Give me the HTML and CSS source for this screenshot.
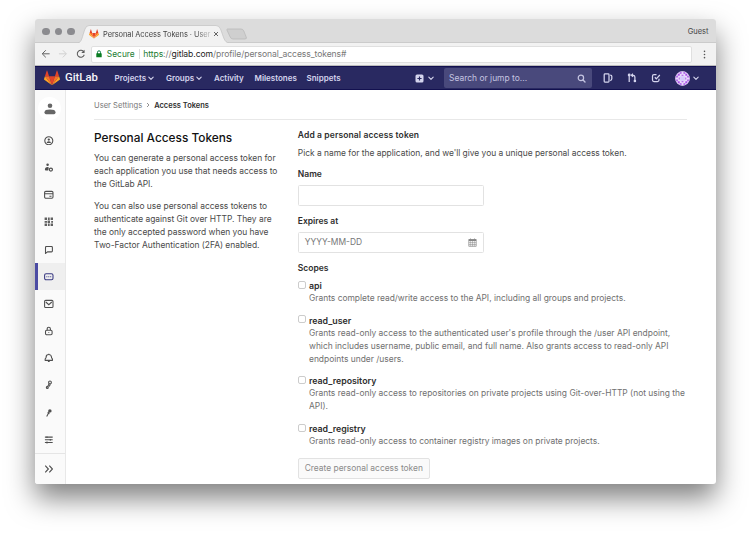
FILE: index.html
```
<!DOCTYPE html>
<html lang="en">
<head>
<meta charset="utf-8">
<title>Personal Access Tokens</title>
<link rel="stylesheet" href="styles.css">
</head>
<body>
<svg class="defs" width="0" height="0">
  <symbol id="logo" viewBox="0 0 36 36">
    <path fill="#e24329" d="M18 34.4 24.6 14H11.4z"/>
    <path fill="#fc6d26" d="M18 34.4 11.4 14H2.1zM18 34.4 24.6 14h9.3z"/>
    <path fill="#fca326" d="M2.1 14 .1 20.2c-.2.6 0 1.2.5 1.5L18 34.4zM33.9 14l2 6.2c.2.6 0 1.2-.5 1.5L18 34.4z"/>
    <path fill="#e24329" d="M2.1 14h9.3l-4-12.300c-.2-.6-1.100-.6-1.300 0zM33.900 14h-9.300l4-12.300c.2-.6 1.100-.6 1.300 0z"/>
  </symbol>
  <symbol id="chevron" viewBox="0 0 8 8"><path d="M1.800 3.200 4 5.400l2.200-2.200" fill="none" stroke="currentColor" stroke-width="1.100" stroke-linecap="round" stroke-linejoin="round"/></symbol>
</svg>
<div class="window">
  <div class="tabs">
    <div class="lights"><i></i><i></i><i></i></div>
    <div class="tab">
      <svg class="tab-shape" viewBox="0 0 152 18" preserveAspectRatio="none"><path d="M0 18C4 17 4 12 7 4Q8.300.5 11 .5H138Q141 .5 142.500 4C146 13 146 17 151 18" fill="#f2f2f2" stroke="#c2c2c2" stroke-width=".7"/></svg>
      <svg class="tab-logo"><use href="#logo"/></svg>
      <span class="tab-title">Personal Access Tokens · User</span>
      <svg class="close" viewBox="0 0 6 6"><path d="m1 1 4 4M5 1 1 5" stroke="#555" stroke-width=".9"/></svg>
    </div>
    <svg class="new-tab" viewBox="0 0 22 12"><path d="M1.500 1H15Q17 1 17.800 3l2.400 6Q21 11 19 11H7Q5 11 4.200 9L1 2.200Q.6 1 1.500 1z" fill="#cfcfcf" stroke="#b6b6b6" stroke-width=".7"/></svg>
    <span class="guest">Guest</span>
  </div>
  <div class="toolbar">
    <svg class="tool" viewBox="0 0 10 10"><path d="M9 5H1.500M5 1.300 1.300 5 5 8.700" fill="none" stroke="#5c5c5c" stroke-width="1"/></svg>
    <svg class="tool" viewBox="0 0 10 10"><path d="M1 5h7.500M5 1.300 8.700 5 5 8.700" fill="none" stroke="#cfcfcf" stroke-width="1"/></svg>
    <svg class="tool" viewBox="0 0 10 10"><path d="M8.200 3A3.700 3.700 0 1 0 8.600 6" fill="none" stroke="#5c5c5c" stroke-width="1.100"/><path d="M8.900.8v3.400H5.500z" fill="#5c5c5c"/></svg>
    <div class="address">
      <svg class="lock" viewBox="0 0 6 8"><path d="M1.500 4V2.300a1.500 1.500 0 0 1 3 0V4" fill="none" stroke="#0b8043"/><rect x=".3" y="3.300" width="5.400" height="4" rx=".4" fill="#0b7d22"/></svg>
      <span class="secure">Secure</span>
      <span class="url"><b>https</b>://<em>gitlab.com</em>/profile/personal_access_tokens#</span>
    </div>
    <svg class="dots" viewBox="0 0 3 10"><circle cx="1.500" cy="1.500" r=".9"/><circle cx="1.500" cy="5" r=".9"/><circle cx="1.500" cy="8.500" r=".9"/></svg>
  </div>
  <nav class="navbar">
    <svg class="nav-logo"><use href="#logo"/></svg>
    <span class="brand">GitLab</span>
    <span class="link projects">Projects <svg class="chev"><use href="#chevron"/></svg></span>
    <span class="link groups">Groups <svg class="chev"><use href="#chevron"/></svg></span>
    <span class="link activity">Activity</span>
    <span class="link milestones">Milestones</span>
    <span class="link">Snippets</span>
    <span class="plus"><svg viewBox="0 0 9 9"><rect x=".5" y=".5" width="8" height="8" rx="1.500" fill="#d5d5ee"/><path d="M4.500 2.400v4.200M2.400 4.500h4.200" stroke="#292961" stroke-width="1.200"/></svg><svg class="chev"><use href="#chevron"/></svg></span>
    <span class="search">Search or jump to...<svg viewBox="0 0 9 9"><circle cx="3.900" cy="3.900" r="2.700" fill="none" stroke="#c4c4e0" stroke-width="1.200"/><path d="m6 6 2 2" stroke="#c4c4e0" stroke-width="1.400" stroke-linecap="round"/></svg></span>
    <svg class="action" viewBox="0 0 10 10"><path d="M2 .9h3.200q.8 0 .8.800v6.600q0 .8-.8.800H2q-.8 0-.8-.8V1.700Q1.200.9 2 .9zM7.200 2q1.600 0 1.600 1.200v2.600q0 1.500-1.600 1.800"/></svg>
    <svg class="action" viewBox="0 0 10 10"><path d="M2.200 1.200v7.900M7.900 9.100V4Q7.900 2.300 6 2.300H4.600M6 .7 4.400 2.300 6 3.900"/><circle cx="2.200" cy="2" r=".8"/><circle cx="7.900" cy="8" r=".7"/></svg>
    <svg class="action" viewBox="0 0 10 10"><path d="M5.500 1.500H3Q1.500 1.500 1.500 3v4Q1.500 8.500 3 8.500h3.500Q8 8.500 8 7V5.700M3.800 4.300l1.500 1.500 3.500-3.800"/></svg>
    <span class="user"><svg viewBox="0 0 16 16"><circle cx="8" cy="8" r="7.700" fill="#eadcfb"/><g fill="#a64fe6"><path d="M5 1h2v2H5zM9 1h2v2H9zM3 3h2v2H3zM11 3h2v2h-2zM1 5h2v2H1zM13 5h2v2h-2zM1 9h2v2H1zM13 9h2v2h-2zM3 11h2v2H3zM11 11h2v2h-2zM5 13h2v2H5zM9 13h2v2H9zM7 4h2v1H7zM7 11h2v1H7zM4 7h1v2H4zM11 7h1v2h-1z"/></g><path d="M5.500 5.500h5v5h-5z" fill="#d4cafa"/><circle cx="8" cy="8" r="7.300" fill="none" stroke="#d9b9f6" stroke-width=".7"/></svg><svg class="chev"><use href="#chevron"/></svg></span>
  </nav>
  <div class="page">
    <aside class="sidebar">
      <div class="profile"><svg viewBox="0 0 12 12"><circle cx="6" cy="2.700" r="2.300"/><path d="M.5 9.200C.5 7 2.500 6.400 6 6.400s5.500.6 5.500 2.800Q11.500 11.300 10 11.300H2Q.5 11.300.5 9.200z"/></svg></div>
      <div class="item"><svg viewBox="0 0 16 16"><circle cx="8" cy="8" r="6.700"/><circle cx="8" cy="6" r="1.900" class="fill"/><path class="fill" d="M4.300 11.500q0-2.800 3.700-2.800t3.700 2.800z"/></svg></div>
      <div class="item"><svg viewBox="0 0 16 16"><circle cx="6" cy="3" r="2.100" class="fill"/><path class="fill" d="M1.500 11q0-4.500 4.500-4.500 2 0 2 1.500L7 12.500H3q-1.500 0-1.500-1.500z"/><circle cx="11.500" cy="11" r="2.600" stroke-width="2"/></svg></div>
      <div class="item"><svg viewBox="0 0 16 16"><rect x="1" y="2.300" width="14" height="11.500" rx="2"/><path d="M1 6.200h14M9 10.300h3.500"/></svg></div>
      <div class="item"><svg viewBox="0 0 16 16"><path class="solid" d="M1 1h4v4H1zM6.500 1h3v4h-3zM11 1h4v4h-4zM1 6.500h4v3H1zM6 6h4v4H6zM12 6.500h3v3h-3zM1 11h4v4H1zM6.500 11h3v4h-3zM11 11h4v4h-4z"/></svg></div>
      <div class="item"><svg viewBox="0 0 16 16"><path d="M4 2.500h8.500Q14 2.500 14 4v6Q14 11.500 12.500 11.500H6l-3.500 2.500V4Q2.500 2.500 4 2.500z"/></svg></div>
      <div class="item active"><svg viewBox="0 0 16 16"><rect x="1" y="3" width="14" height="10" rx="2.500"/><path d="M4 8h1.600M7.200 8h1.600M10.400 8H12"/></svg></div>
      <div class="item"><svg viewBox="0 0 16 16"><rect x="1" y="2.300" width="14" height="12" rx="1.800"/><path d="m3 5 5 4.500L13 5"/></svg></div>
      <div class="item"><svg viewBox="0 0 16 16"><rect x="2.500" y="7" width="11" height="7.500" rx="2"/><path d="M5.300 7V5Q5.300 2 8 2t2.700 3v2M8 9.800v1.500"/></svg></div>
      <div class="item"><svg viewBox="0 0 16 16"><path d="M2 12.300C1 9 3.500 9.500 3.500 7a4.500 4.500 0 0 1 9 0c0 2.500 2.500 2 1.500 5.300zM6.500 14.300h3M8 1.200V3"/></svg></div>
      <div class="item"><svg viewBox="0 0 16 16"><circle cx="10" cy="4" r="2.300"/><path d="M8.700 6 5.500 12M10.700 7l-2.200 4"/><circle cx="5.500" cy="12.500" r="1.600"/></svg></div>
      <div class="item"><svg viewBox="0 0 16 16"><circle cx="9.800" cy="4.800" r="2.900" class="fill"/><path d="M9 6 4.500 14M6 7.500l3 2"/></svg></div>
      <div class="item"><svg viewBox="0 0 16 16"><path d="M1.500 3.500h13M1.500 8h13M1.500 12.500h13M5 2v3M10.500 6.500v3M5 11v3"/></svg></div>
      <div class="collapse"><svg viewBox="0 0 16 16"><path d="m2 2.500 5 5.500-5 5.500M8.500 2.500l5 5.500-5 5.500"/></svg></div>
    </aside>
    <main class="content">
      <div class="crumbs"><span class="parent">User Settings</span><svg viewBox="0 0 4 6"><path d="m1 1 2 2-2 2" fill="none" stroke="#777" stroke-width=".8"/></svg><strong>Access Tokens</strong></div>
      <div class="columns">
        <section class="intro">
          <h1>Personal Access Tokens</h1>
          <p>You can generate a personal access token for<br>each application you use that needs access to<br>the GitLab API.</p>
          <p>You can also use personal access tokens to<br>authenticate against Git over HTTP. They are<br>the only accepted password when you have<br>Two-Factor Authentication (2FA) enabled.</p>
        </section>
        <section class="form">
          <h2>Add a personal access token</h2>
          <p class="lead">Pick a name for the application, and we'll give you a unique personal access token.</p>
          <div class="label">Name</div>
          <div class="input"></div>
          <div class="label">Expires at</div>
          <div class="input">YYYY-MM-DD<svg viewBox="0 0 9 9"><path d="M.8 1.500h7.400v6.800H.8z" fill="none" stroke="#858585" stroke-width=".7"/><path d="M.8 1.200h7.400v1.700H.8z" fill="#858585"/><path d="M2.500.2v2M6.500.2v2M.8 4.600h7.400M.8 6.500h7.400M2.700 3v5.300M4.500 3v5.300M6.300 3v5.300" stroke="#858585" stroke-width=".5"/></svg></div>
          <div class="label scopes">Scopes</div>
          <div class="scope"><i></i><div><b>api</b><p>Grants complete read/write access to the API, including all groups and projects.</p></div></div>
          <div class="scope"><i></i><div><b>read_user</b><p>Grants read-only access to the authenticated user's profile through the /user API endpoint,<br>which includes username, public email, and full name. Also grants access to read-only API<br>endpoints under /users.</p></div></div>
          <div class="scope"><i></i><div><b>read_repository</b><p>Grants read-only access to repositories on private projects using Git-over-HTTP (not using the<br>API).</p></div></div>
          <div class="scope"><i></i><div><b>read_registry</b><p>Grants read-only access to container registry images on private projects.</p></div></div>
          <div class="button">Create personal access token</div>
        </section>
      </div>
    </main>
  </div>
</div>
</body>
</html>
```
FILE: styles.css
```
* { box-sizing: border-box; }
body { margin: 0; height: 533px; overflow: hidden; background: #fff; font: 8.440px/13px Inter, "Liberation Sans", sans-serif; color: #4a4a4a; white-space: nowrap; }
svg { display: block; flex: none; }
.defs { position: absolute; }
h1, h2, p { margin: 0; }
i { display: block; }

.window { width: 681px; height: 465px; margin: 19px 0 0 34.500px; border-radius: 3px; background: #fff; box-shadow: 0 14px 28px rgba(0,0,0,.5); overflow: hidden; display: flex; flex-direction: column; }

.tabs { height: 24px; background: #dcdcdc; display: flex; align-items: flex-end; border-bottom: 1px solid #cbcbcb; flex: none; }
.lights { display: flex; gap: 4.800px; padding: 2px 0 0 7.500px; align-self: center; }
.lights i { width: 7.800px; height: 7.800px; border-radius: 50%; background: #8b8b8f; }
.tab { width: 152px; height: 18px; margin: 0 0 -1px 3px; display: flex; align-items: center; position: relative; padding-left: 11.500px; }
.tab > * { position: relative; }
.tab .tab-shape { position: absolute; inset: 0; width: 152px; height: 18px; }
.tab-logo { width: 10px; height: 10px; }
.tab-title { width: 109px; margin-left: 3.500px; font-size: 7.500px; color: #444; letter-spacing: -.08px; -webkit-mask-image: linear-gradient(90deg, #000 84%, rgba(0,0,0,.25) 98%); mask-image: linear-gradient(90deg, #000 84%, rgba(0,0,0,.25) 98%); }
.close { width: 6px; height: 6px; margin-left: 1px; }
.new-tab { width: 22px; height: 12px; margin: 0 0 2px -4px; }
.guest { margin: 0 7px 0 auto; align-self: center; padding-top: 2px; font-size: 7.500px; color: #444; }

.toolbar { height: 23px; background: #f2f2f2; display: flex; align-items: center; flex: none; padding: 0 9.500px 0 6.500px; gap: 7.700px; border-bottom: 1px solid #bdbdbd; }
.tool { width: 9.600px; height: 9.600px; }
.address { flex: 1; height: 17px; background: #fff; border: 1px solid #e0e0e0; border-radius: 2px; display: flex; align-items: center; padding-left: 4px; margin-right: 3px; margin-left: -1.500px; font-size: 8.600px; color: #777; }
.lock { width: 6px; height: 8px; }
.secure { color: #1b7c32; margin-left: 4.500px; padding-right: 4px; border-right: 1px solid #ddd; line-height: 10px; font-size: 8.400px; }
.url { margin-left: 3.500px; font-size: 8.600px; letter-spacing: -.09px; }
.url b { font-weight: 400; color: #1b7c32; }
.url em { font-style: normal; color: #222; }
.dots { width: 3px; height: 9px; fill: #555; }

.navbar { height: 24px; background: #292961; border-top: 1px solid #12104f; border-bottom: 1px solid #12104f; display: flex; align-items: center; padding: 0 16px 0 9.500px; flex: none; color: #d5d5ee; font-weight: 600; font-size: 8px; }
.nav-logo { width: 16px; height: 16px; }
.brand { font: 500 11.300px/14px Roboto, sans-serif; color: #f4f4fa; margin-left: 5px; width: 49.500px; }
.link { display: flex; align-items: center; gap: 1px; }
.chev { width: 8px; height: 8px; }
.projects { width: 51.500px; }
.groups { width: 48px; }
.activity { width: 40.500px; }
.milestones { width: 52px; }
.plus { display: flex; align-items: center; gap: 3px; margin-left: auto; }
.plus svg:first-child { width: 9px; height: 9px; }
.search { width: 148px; height: 20px; margin: 0 10.500px 0 9px; border-radius: 2px; background: #49497c; display: flex; align-items: center; justify-content: space-between; padding: 0 6px 0 5px; font-weight: 400; font-size: 8.450px; color: #c4c4e0; }
.search svg { width: 9px; height: 9px; }
.action { width: 10px; height: 10px; margin-right: 14.300px; fill: none; stroke: #d5d5ee; stroke-width: 1.250; }
.user { display: flex; align-items: center; gap: 2px; margin-left: -1px; }
.user svg:first-child { width: 15px; height: 15px; }

.page { flex: 1; display: flex; min-height: 0; }
.sidebar { width: 31px; background: #fafafa; border-right: 1px solid #e8e8e8; display: flex; flex-direction: column; }
.profile { width: 23px; height: 23px; border-radius: 50%; background: #fff; margin: 7px 0 7px 3.500px; display: flex; align-items: center; justify-content: center; flex: none; }
.profile svg { width: 12px; height: 12px; fill: #666; }
.item { height: 27.200px; display: flex; align-items: center; justify-content: center; flex: none; padding-right: 1px; }
.item svg { width: 9.600px; height: 9.600px; fill: none; stroke: #4f4f4f; stroke-width: 1.800; }
.item .fill { fill: #4f4f4f; stroke: none; }
.item .solid { fill: #606060; stroke: none; }
.active { background: #efefef; border-left: 3px solid #4b4ba3; padding-right: 4px; }
.item.active svg { stroke: #393982; }
.collapse { flex: 1; border-top: 1px solid #e5e5e5; display: flex; align-items: center; justify-content: center; padding-right: 1px; }
.collapse svg { width: 10px; height: 10px; fill: none; stroke: #4f4f4f; stroke-width: 1.800; }

.content { flex: 1; padding: 0 29px 0 28.500px; }
.crumbs { height: 30px; border-bottom: 1px solid #e8e8e8; display: flex; align-items: center; padding-top: 1px; font-size: 7.600px; color: #777; }
.crumbs svg { width: 4px; height: 6px; margin: 0 4px; }
.crumbs strong { color: #2e2e2e; font-weight: 600; font-size: 7.500px; }
.columns { display: flex; padding-top: 9px; }
.intro { width: 203.800px; padding-top: 1px; }
h1 { font-size: 11.850px; line-height: 17px; font-weight: 500; color: #111; margin-bottom: 5px; }
.intro p { margin-bottom: 9px; letter-spacing: -.015px; }
.form h2, .label { font-size: 8.500px; line-height: 13px; font-weight: 600; color: #2e2e2e; }
.form h2 { letter-spacing: .12px; }
.lead { margin: 5px 0 8px; letter-spacing: -.01px; }
.input { width: 186px; height: 21px; border: 1px solid #e2e2e2; border-radius: 1.500px; margin: 4px 0 9px; padding: 0 6px; display: flex; align-items: center; justify-content: space-between; color: #777; }
.input svg { width: 9px; height: 9px; }
.scopes { margin-bottom: 4px; }
.scope { display: flex; gap: 3.200px; margin-bottom: 8.700px; }
.scope i { width: 8px; height: 8px; border: 1px solid #ccc; border-radius: 2px; margin-top: 1.500px; flex: none; background: #fff; }
.scope b { display: block; font-weight: 600; font-size: 8.800px; color: #2e2e2e; }
.scope p { color: #707070; }
.button { width: 132px; height: 21px; margin-top: 9.500px; border: 1px solid #e2e2e2; border-radius: 2px; background: #fafafa; color: #8b8b8b; display: flex; align-items: center; justify-content: center; }
```
